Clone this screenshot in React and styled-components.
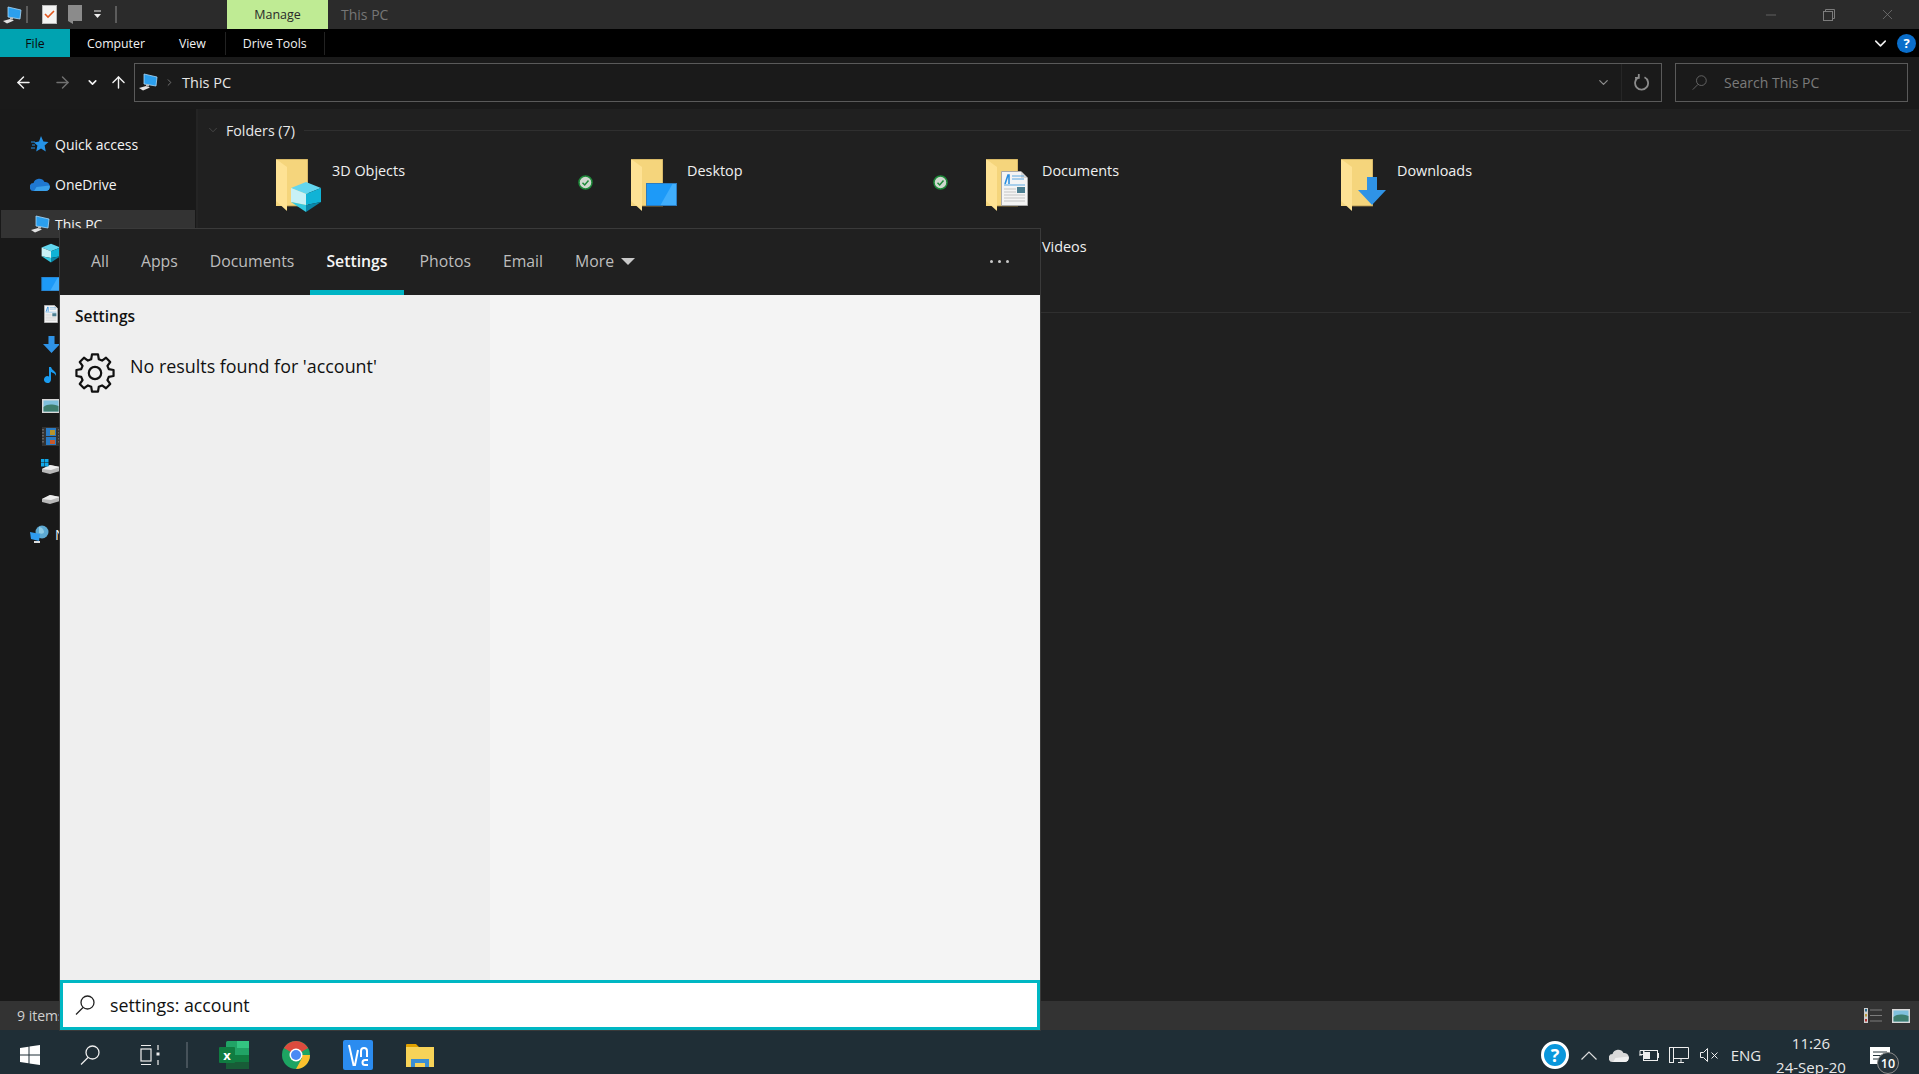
import React from 'react';
import styled, { createGlobalStyle } from 'styled-components';
import { ArrowLeft, ArrowRight, ArrowUp, ChevronDown, ChevronRight, Minus, X } from 'lucide-react';

const GlobalStyle = createGlobalStyle`
  html, body { margin: 0; padding: 0; height: 100%; background: #202020; overflow: hidden; }
  * { box-sizing: border-box; }
  body { font-family: "Open Sans", "Noto Sans", "Liberation Sans", sans-serif; }
`;

const Screen = styled.div`
  position: relative;
  width: 1919px;
  height: 1074px;
  display: flex;
  flex-direction: column;
  overflow: hidden;
  color: #fff;
`;

/* title bar */
const TitleBar = styled.div`
  height: 29px;
  background: #2b2b2b;
  display: flex;
  flex-shrink: 0;
`;
const QuickTools = styled.div`
  width: 227px;
  display: flex;
  align-items: center;
  padding-left: 2px;
`;
const ToolSep = styled.span`
  width: 2px;
  height: 17px;
  background: #5c5c5c;
  margin: 0 ${(p) => p.$right || 0}px 0 ${(p) => p.$left || 0}px;
`;
const ManageTab = styled.div`
  width: 101px;
  background: #bfeb94;
  color: #2a2a2a;
  font-size: 12.5px;
  display: flex;
  align-items: center;
  justify-content: center;
`;
const WindowTitle = styled.div`
  margin-left: 13px;
  color: #767676;
  font-size: 14px;
  line-height: 29px;
  flex: 1;
`;
const WinButton = styled.div`
  width: 58.5px;
  display: flex;
  align-items: center;
  justify-content: center;
  color: #7c7c7c;
`;

/* ribbon */
const Ribbon = styled.div`
  height: 28px;
  background: #000;
  display: flex;
  align-items: stretch;
  flex-shrink: 0;
  font-size: 12.3px;
`;
const FileTab = styled.div`
  width: 70px;
  background: #00a3b1;
  color: #0b0b0b;
  display: flex;
  align-items: center;
  justify-content: center;
`;
const RibbonTab = styled.div`
  padding: 0 17px;
  display: flex;
  align-items: center;
  color: #f2f2f2;
  height: 23px;
  margin-top: 3px;
  ${(p) => p.$tool && 'margin-left: 2px; border-left: 1px solid #222; border-right: 1px solid #222;'}
`;
const RibbonRight = styled.div`
  margin-left: auto;
  display: flex;
  align-items: center;
  padding-right: 3px;
  gap: 7px;
`;
const HelpDot = styled.div`
  width: 19px;
  height: 19px;
  border-radius: 50%;
  background: #0a6ecb;
  color: #fff;
  font-weight: 700;
  font-size: 13px;
  display: flex;
  align-items: center;
  justify-content: center;
`;

/* address row */
const AddressRow = styled.div`
  height: 52px;
  background: #1a1a1a;
  display: flex;
  align-items: center;
  flex-shrink: 0;
  padding: 0 11px 2px 4px;
`;
const NavButton = styled.div`
  width: ${(p) => p.$w}px;
  display: flex;
  align-items: center;
  justify-content: center;
  color: ${(p) => (p.$off ? '#707070' : '#f2f2f2')};
`;
const AddressBox = styled.div`
  flex: 1;
  height: 39px;
  border: 1px solid #5a5a5a;
  display: flex;
  align-items: center;
  padding-left: 3px;
  font-size: 14.5px;
  color: #e6e6e6;
`;
const Crumb = styled.span`
  margin-left: 7px;
`;
const AddressEnd = styled.div`
  margin-left: auto;
  display: flex;
  height: 100%;
  color: #8c8c8c;
`;
const AddressCell = styled.div`
  width: ${(p) => p.$w}px;
  display: flex;
  align-items: center;
  justify-content: center;
  ${(p) => p.$line && 'border-left: 1px solid #262626;'}
`;
const SearchBox = styled.div`
  width: 233px;
  height: 39px;
  margin-left: 13px;
  border: 1px solid #5a5a5a;
  display: flex;
  align-items: center;
  padding-left: 16px;
  gap: 17px;
  color: #7a7a7a;
  font-size: 14px;
`;

/* main area */
const Main = styled.div`
  flex: 1;
  display: flex;
  min-height: 0;
`;
const Sidebar = styled.div`
  width: 198px;
  background: #191919;
  border-right: 2px solid #242424;
  padding-top: 21px;
  flex-shrink: 0;
  font-size: 14px;
`;
const NavRow = styled.div`
  height: ${(p) => (p.$child ? 30.5 : 28)}px;
  margin-top: ${(p) => p.$top || 0}px;
  width: 194px;
  margin-left: 1px;
  padding-left: ${(p) => (p.$child ? 40 : 29)}px;
  display: flex;
  align-items: center;
  gap: 5px;
  color: #f4f4f4;
  white-space: nowrap;
  background: ${(p) => (p.$active ? '#333333' : 'transparent')};
`;
const NavIcon = styled.span`
  width: 20px;
  height: 20px;
  display: flex;
  flex-shrink: 0;
  align-items: center;
  justify-content: center;
`;
const Content = styled.div`
  flex: 1;
  background: #202020;
  padding: 9px 8px 0 8px;
`;
const SectionHead = styled.div`
  height: 24px;
  display: flex;
  align-items: center;
  gap: 6px;
  font-size: 14.2px;
  color: #e8e8e8;
  margin-top: ${(p) => p.$top || 0}px;
`;
const HeadChevron = styled.span`
  display: flex;
  color: #5f5f5f;
`;
const HeadLine = styled.span`
  flex: 1;
  height: 1px;
  margin-left: 3px;
  background: #2f2f2f;
`;
const FolderGrid = styled.div`
  display: grid;
  grid-template-columns: repeat(4, 355px);
  grid-auto-rows: 76px;
  margin: 17px 0 0 56px;
`;
const FolderItem = styled.div`
  display: flex;
  padding-left: 14px;
  padding-right: 24px;
  font-size: 14.4px;
  color: #f0f0f0;
`;
const FolderName = styled.span`
  margin: 2px 0 0 ${(p) => p.$gap || 8}px;
  line-height: 20px;
`;
const SyncDot = styled.span`
  margin: 16px 0 0 auto;
  display: flex;
`;

/* status bar */
const StatusBar = styled.div`
  height: 29px;
  background: #333333;
  display: flex;
  align-items: center;
  flex-shrink: 0;
  padding: 0 9px 0 17px;
  font-size: 14px;
  color: #d0d0d0;
`;
const ViewToggles = styled.div`
  margin-left: auto;
  display: flex;
  align-items: center;
  gap: 10px;
`;

/* taskbar */
const Taskbar = styled.div`
  height: 44px;
  padding-top: 6px;
  background: #1f2e36;
  display: flex;
  align-items: center;
  flex-shrink: 0;
`;
const TaskButton = styled.div`
  width: ${(p) => p.$w || 60}px;
  height: 100%;
  display: flex;
  align-items: center;
  justify-content: center;
`;
const TaskSep = styled.span`
  width: 2px;
  height: 26px;
  background: #46525a;
  margin: 0 15px 0 6px;
`;
const Tray = styled.div`
  margin-left: auto;
  height: 100%;
  display: flex;
  align-items: center;
  padding-right: 13px;
  color: #e8e8e8;
`;
const TrayCell = styled.div`
  width: ${(p) => p.$w || 30}px;
  height: 100%;
  display: flex;
  align-items: center;
  justify-content: center;
  position: relative;
  font-size: 15px;
`;
const TrayHelp = styled.div`
  width: 28px;
  height: 28px;
  border-radius: 50%;
  border: 3px solid #fff;
  background: #0a97dc;
  color: #fff;
  font-weight: 700;
  font-size: 18px;
  display: flex;
  align-items: center;
  justify-content: center;
`;
const Clock = styled.div`
  display: flex;
  flex-direction: column;
  align-items: center;
  gap: 10px;
  line-height: 14px;
  font-size: 15px;
  white-space: nowrap;
`;
const Badge = styled.span`
  position: absolute;
  left: 23px;
  top: 16px;
  width: 22px;
  height: 22px;
  border-radius: 50%;
  border: 1px solid #8b8b8b;
  background: #27343b;
  color: #fff;
  font-size: 12.5px;
  font-weight: 600;
  display: flex;
  align-items: center;
  justify-content: center;
`;

/* search flyout */
const Flyout = styled.div`
  position: absolute;
  left: 60px;
  top: 229px;
  width: 980px;
  height: 801px;
  display: flex;
  flex-direction: column;
  box-shadow: 0 0 0 1px #3a3a3a;
`;
const FlyoutTabs = styled.div`
  height: 66px;
  background: #202020;
  display: flex;
  align-items: stretch;
  padding-left: 15px;
  flex-shrink: 0;
`;
const FlyoutTab = styled.div`
  padding: 3px 16px 0;
  display: flex;
  align-items: center;
  gap: 7px;
  font-size: 15.8px;
  color: ${(p) => (p.$on ? '#f5f5f5' : '#bdbdbd')};
  font-weight: ${(p) => (p.$on ? 600 : 400)};
  border-bottom: 5px solid ${(p) => (p.$on ? '#00b4c4' : 'transparent')};
`;
const Caret = styled.span`
  width: 0;
  height: 0;
  border-left: 7px solid transparent;
  border-right: 7px solid transparent;
  border-top: 7px solid #c8c8c8;
`;
const MoreDots = styled.div`
  margin: 0 31px 0 auto;
  display: flex;
  align-items: center;
  gap: 5px;
  padding-bottom: 1px;

  span {
    width: 3px;
    height: 3px;
    border-radius: 50%;
    background: #c8c8c8;
  }
`;
const FlyoutBody = styled.div`
  flex: 1;
  display: flex;
  background: #f4f4f4;
`;
const Results = styled.div`
  width: 430px;
  background: #efefef;
  padding: 10px 15px;
  color: #111;
`;
const ResultsTitle = styled.div`
  font-size: 15.5px;
  font-weight: 600;
  line-height: 22px;
`;
const NoResult = styled.div`
  display: flex;
  gap: 15px;
  margin-top: 26px;
  font-size: 17.9px;
  line-height: 26px;
`;
const SearchInput = styled.div`
  height: 50px;
  background: #fff;
  border: 3px solid #00b7c3;
  display: flex;
  align-items: center;
  padding-left: 12px;
  gap: 15px;
  color: #111;
  font-size: 17.8px;
  flex-shrink: 0;
`;

/* drawings */
const PcIcon = ({ size = 20 }) => (
  <svg width={size} height={size} viewBox="0 0 20 20">
    <polygon points="6,2 19,5 18,14 6,12" fill="#2b9fee" stroke="#a9d8f7" strokeWidth="0.8" />
    <polygon points="1,16 8,14 12,15.5 5,18.5" fill="#e2e2e2" />
    <rect x="8" y="12.5" width="3" height="2" fill="#bbb" />
  </svg>
);

const Star = () => (
  <svg width="18" height="18" viewBox="0 0 18 18">
    <polygon points="10,1 12.4,6.4 17.5,7 13.6,10.6 14.8,16.5 10,13.5 5.2,16.5 6.4,10.6 3,7.5 8,6.4" fill="#2592e6" />
    <path d="M0 7h4M1 10h3M0 13h4" stroke="#2592e6" strokeWidth="1" />
  </svg>
);

const Cloud = ({ w = 20, c1 = '#1f78d1', c2 = '#3aa0ea' }) => (
  <svg width={w} height={w * 0.65} viewBox="0 0 20 13">
    <path d="M4 13a4 4 0 0 1-.5-8A6 6 0 0 1 14.5 4 4.5 4.5 0 0 1 16 13z" fill={c1} />
    <path d="M4 13h12a4 4 0 0 0 3.5-5.5L6.500 9z" fill={c2} />
  </svg>
);

const Cube = ({ size = 32 }) => (
  <svg width={size} height={size} viewBox="0 0 32 32">
    <polygon points="16,1 31,7 16,13 1,7" fill="#62d6ef" />
    <polygon points="1,7 16,13 16,24 1,21" fill="#c8f1f6" />
    <polygon points="16,13 31,7 31,21 16,24" fill="#10b3d6" />
    <polygon points="1,21 16,24 16,31" fill="#33c8df" />
    <polygon points="31,21 16,24 16,31" fill="#0a86a8" />
  </svg>
);

const DocSheet = ({ w = 27, h = 35 }) => (
  <svg width={w} height={h} viewBox="0 0 27 35">
    <polygon points="0.500,0.500 20,0.500 26.500,7 26.500,34.500 0.500,34.500" fill="#f4f4f4" stroke="#aaa" />
    <polygon points="20,0.500 26.500,7 20,7" fill="#d5d5d5" />
    <path d="M4 13 7 4h1v9" stroke="#2b8fe0" strokeWidth="1.600" fill="none" />
    <path d="M11 5h12M11 8h12M3 14h21" stroke="#5aa8e2" strokeWidth="1" />
    <path d="M3 18h12M3 21h12M3 24h21M3 27h21M3 30h21" stroke="#c4c4c4" strokeWidth="1" />
    <rect x="16" y="16" width="8" height="6" fill="#4b7f92" />
  </svg>
);

const DownArrow = ({ w = 28, h = 28 }) => (
  <svg width={w} height={h} viewBox="0 0 28 28">
    <polygon points="9,0 19,0 19,13 28,13 14,28 0,13 9,13" fill="#2f93e6" />
  </svg>
);

const FolderBox = styled.span`
  position: relative;
  width: 46px;
  height: 53px;
  flex-shrink: 0;
  display: block;
`;
const FolderIcon = ({ children }) => (
  <FolderBox>
    <svg width="32" height="52" viewBox="0 0 32 52">
      <rect x="0" y="0" width="32" height="47" fill="#f5d57c" />
      <polygon points="0,0 11,8 11,52 0,42" fill="#fee294" />
      <path d="M0 0h32v47H11" fill="none" stroke="#a98e4a" strokeWidth="0.800" />
    </svg>
    {children}
  </FolderBox>
);
const Overlay = styled.span`
  position: absolute;
  left: ${(p) => p.$x}px;
  top: ${(p) => p.$y}px;
  display: flex;
`;

const BlueTile = ({ w = 31, h = 23 }) => (
  <svg width={w} height={h} viewBox="0 0 31 23">
    <rect width="31" height="23" fill="#1d9af8" />
    <polygon points="14,23 27,0 31,0 31,23" fill="#40aefc" />
    <rect x="0.500" y="0.500" width="30" height="22" fill="none" stroke="#2b7cc0" />
  </svg>
);

const PhotoThumb = ({ w = 18, h = 14 }) => (
  <svg width={w} height={h} viewBox="0 0 18 14">
    <rect width="18" height="14" fill="#d8d8d8" />
    <rect x="1.500" y="1.500" width="15" height="11" fill="#7fc0dd" />
    <path d="M1.500 8c4-3 8-3 15-1v5.500h-15z" fill="#3d7d6e" />
  </svg>
);

const Film = () => (
  <svg width="18" height="19" viewBox="0 0 18 19">
    <rect width="18" height="19" fill="#333" />
    <rect x="4" y="1" width="10" height="8" fill="#2a7bc4" />
    <rect x="4" y="10" width="10" height="8" fill="#2a7bc4" />
    <rect x="8" y="3" width="5" height="5" fill="#b8942c" />
    <rect x="8" y="13" width="5" height="4" fill="#c85a2c" />
    <path d="M1 2v15M17 2v15" stroke="#777" strokeWidth="1.400" strokeDasharray="1.500 1.500" />
  </svg>
);

const Drive = ({ win }) => (
  <svg width="20" height="16" viewBox="0 0 20 16">
    <polygon points="1,10 9,6 19,8 19,12 9,15 1,13" fill="#b9b9b9" />
    <polygon points="1,10 9,6 19,8 10,11" fill="#ececec" />
    {win && (
      <g fill="#10a8e8">
        <rect x="0" y="0" width="3.500" height="3.500" />
        <rect x="4" y="0" width="3.500" height="3.500" />
        <rect x="0" y="4" width="3.500" height="3.500" />
        <rect x="4" y="4" width="3.500" height="3.500" />
      </g>
    )}
  </svg>
);

const Note = () => (
  <svg width="14" height="18" viewBox="0 0 14 18">
    <path d="M7 1v12.500a3.500 3.500 0 1 1-2-3.100V1z" fill="#1a9cf0" />
    <path d="M7 1c1 4 6 4 5 9-1-3-3-3-5-4z" fill="#1a9cf0" />
  </svg>
);

const Globe = () => (
  <svg width="20" height="20" viewBox="0 0 20 20">
    <circle cx="12" cy="7" r="6.500" fill="#5da9d2" />
    <path d="M9 2c3 0 5 3 5 5s-3 2-5 1z" fill="#8fcbe5" />
    <polygon points="0,7 10,9 9,16 1,14" fill="#2e9cf0" />
    <rect x="4" y="16" width="6" height="2" fill="#ddd" />
  </svg>
);

const CheckMark = () => (
  <svg width="15" height="15" viewBox="0 0 15 15">
    <circle cx="7.500" cy="7.500" r="6.500" fill="#cfd8cf" stroke="#1e8a3a" strokeWidth="1.500" />
    <path d="M4.500 7.800 6.700 10l3.800-4.500" stroke="#1e8a3a" strokeWidth="1.500" fill="none" />
  </svg>
);

const Refresh = () => (
  <svg width="16" height="17" viewBox="0 0 16 17" fill="none" stroke="#8c8c8c" strokeWidth="1.800">
    <path d="M10.500 3.300A6.500 6.500 0 1 1 4.500 3.400" />
    <path d="M4.800 0v3.800H1" />
  </svg>
);

const gearPoints = () => {
  const pts = [];
  for (let i = 0; i < 8; i++) {
    const a = (i * Math.PI) / 4;
    [[14.3, -0.27], [18.8, -0.16], [18.8, 0.16], [14.3, 0.27]].forEach(([r, d]) => {
      pts.push(`${(20 + r * Math.cos(a + d)).toFixed(2)},${(20 + r * Math.sin(a + d)).toFixed(2)}`);
    });
  }
  return pts.join(' ');
};

const Gear = () => (
  <svg width="40" height="40" viewBox="0 0 40 40" fill="none" stroke="#111" strokeWidth="2.200" strokeLinejoin="round">
    <polygon points={gearPoints()} />
    <circle cx="20" cy="20" r="6.200" />
  </svg>
);

const Lens = ({ size = 20, color = '#333', sw = 1.4 }) => (
  <svg width={size} height={size} viewBox="0 0 20 20" fill="none" stroke={color} strokeWidth={sw}>
    <circle cx="12.500" cy="7.500" r="6.500" />
    <path d="M8 12.500 1 19.500" />
  </svg>
);

const WinLogo = () => (
  <svg width="20" height="20" viewBox="0 0 20 20" fill="#fff">
    <polygon points="0,3 8.500,1.700 8.500,9.500 0,9.500" />
    <polygon points="9.500,1.500 20,0 20,9.500 9.500,9.500" />
    <polygon points="0,10.500 8.500,10.500 8.500,18.300 0,17" />
    <polygon points="9.500,10.500 20,10.500 20,20 9.500,18.500" />
  </svg>
);

const TaskView = () => (
  <svg width="20" height="20" viewBox="0 0 20 20" fill="none" stroke="#eee" strokeWidth="1.200">
    <path d="M1 .500h10M1 19.500h10" />
    <rect x="1" y="4" width="10" height="12" />
    <path d="M18 0v5M18 15v5" />
    <rect x="16.500" y="7.500" width="3" height="3" fill="#eee" stroke="none" />
  </svg>
);

const Excel = () => (
  <svg width="30" height="28" viewBox="0 0 30 28">
    <rect x="7" y="0" width="23" height="28" rx="1.500" fill="#21a366" />
    <rect x="18" y="0" width="12" height="7" fill="#33c481" />
    <rect x="7" y="14" width="23" height="7" fill="#107c41" />
    <rect x="7" y="21" width="23" height="7" fill="#185c37" />
    <rect x="0" y="6" width="16" height="16" rx="1" fill="#107c41" />
    <text x="8" y="19" textAnchor="middle" fontSize="13" fontWeight="700" fill="#fff" fontFamily="Open Sans, sans-serif">x</text>
  </svg>
);

const Chrome = () => (
  <svg width="28" height="28" viewBox="0 0 28 28">
    <circle cx="14" cy="14" r="14" fill="#1da462" />
    <path d="M14 14 1.900 7A14 14 0 0 1 26.100 7z" fill="#dd4b3e" />
    <path d="M14 14h14A14 14 0 0 1 14 28L20 17z" fill="#fbc02d" />
    <circle cx="14" cy="14" r="6.500" fill="#fff" />
    <circle cx="14" cy="14" r="5" fill="#4a8af4" />
  </svg>
);

const Vnc = () => (
  <svg width="30" height="30" viewBox="0 0 30 30">
    <rect width="30" height="30" rx="2" fill="#2b8cf0" />
    <path d="M6 5l4.500 20h1.500L15 10M18 17v-6a3 3 0 0 1 6 0v6M25 20h-3a2.500 2.500 0 0 0 0 5h3" fill="none" stroke="#fff" strokeWidth="2" />
  </svg>
);

const Explorer = () => (
  <svg width="28" height="24" viewBox="0 0 28 24">
    <path d="M0 2a1 1 0 0 1 1-1h9l3 3h15v4H0z" fill="#e0a100" />
    <rect y="4" width="28" height="20" fill="#f7d358" />
    <path d="M5 24v-8h18v8h-4v-4H9v4z" fill="#3a8fd4" />
  </svg>
);

const ChevronTray = () => (
  <svg width="16" height="9" viewBox="0 0 16 9" fill="none" stroke="#ddd" strokeWidth="1.200"><path d="M.500 8.500 8 1l7.500 7.500" /></svg>
);

const Battery = () => (
  <svg width="20" height="14" viewBox="0 0 20 14" fill="none" stroke="#eee">
    <rect x="4.500" y="2.500" width="14" height="10" />
    <rect x="5" y="4" width="6" height="7" fill="#eee" stroke="none" />
    <path d="M19.500 5v5M0 7h3M1 2.500h4v4H1z" />
  </svg>
);

const NetIcon = () => (
  <svg width="20" height="16" viewBox="0 0 20 16" fill="none" stroke="#eee">
    <path d="M5 .500h14.500v11H4" />
    <rect x=".500" y=".500" width="4" height="15" />
    <path d="M12 12v3M9 15.500h6" />
  </svg>
);

const Mute = () => (
  <svg width="19" height="14" viewBox="0 0 19 14" fill="none" stroke="#eee">
    <path d="M.500 4.500h3l4-4v13l-4-4h-3zM11.500 4.500l6 6M17.500 4.500l-6 6" />
  </svg>
);

const NoteBubble = () => (
  <svg width="20" height="17" viewBox="0 0 20 17">
    <rect width="20" height="17" fill="#fff" />
    <path d="M3 5h14M3 8.500h14M3 12h9" stroke="#26343b" strokeWidth="1" />
  </svg>
);

const DetailsView = () => (
  <svg width="18" height="15" viewBox="0 0 18 15">
    <rect width="4" height="15" fill="#cfcfcf" />
    <rect x="1" y="1" width="2" height="2.500" fill="#2a6a8a" />
    <rect x="1" y="6" width="2" height="2.500" fill="#b89a3c" />
    <rect x="1" y="11" width="2" height="2.500" fill="#b03030" />
    <path d="M6 2h12M6 7.500h12M6 13h12" stroke="#7c7c7c" strokeWidth="1" />
  </svg>
);

// the last row sits mostly under the search flyout, only Videos shows
const folders = [
  { id: 'objects', name: '3D Objects', x: 14, y: 22, art: <Cube />, synced: true, gap: 10 },
  { id: 'desktop', name: 'Desktop', x: 15, y: 24, art: <BlueTile />, synced: true, gap: 10 },
  { id: 'documents', name: 'Documents', x: 15, y: 12, art: <DocSheet />, gap: 10 },
  { id: 'downloads', name: 'Downloads', x: 17, y: 18, art: <DownArrow />, gap: 10 },
  { id: 'music' },
  { id: 'pictures' },
  { id: 'videos', name: 'Videos', gap: 10 },
];

const treeIcons = [
  <Cube size={20} />,
  <BlueTile w={20} h={14} />,
  <DocSheet w={14} h={18} />,
  <DownArrow w={17} h={17} />,
  <Note />,
  <PhotoThumb />,
  <Film />,
  <Drive win />,
  <Drive />,
];

const tabs = ['All', 'Apps', 'Documents', 'Settings', 'Photos', 'Email'];

const App = () => (
  <Screen>
    <GlobalStyle />
    <TitleBar>
      <QuickTools>
        <PcIcon />
        <ToolSep $left={4} $right={14} />
        <svg width="15" height="19" viewBox="0 0 15 19">
          <rect x=".500" y=".500" width="14" height="18" fill="#f3f3f3" stroke="#bbb" />
          <path d="M3 9l3 3 6-6" stroke="#e2561e" strokeWidth="1.600" fill="none" />
        </svg>
        <svg width="14" height="19" viewBox="0 0 14 19" style={{ marginLeft: 11 }}>
          <polygon points="0,0 14,0 14,16 5,16 5,19 0,16" fill="#8b8b8b" />
        </svg>
        <svg width="9" height="9" viewBox="0 0 9 9" style={{ marginLeft: 11 }}>
          <path d="M1 1h7" stroke="#eee" />
          <polygon points="1,4 8,4 4.500,8" fill="#eee" />
        </svg>
        <ToolSep $left={13} />
      </QuickTools>
      <ManageTab>Manage</ManageTab>
      <WindowTitle>This PC</WindowTitle>
      <WinButton><Minus size={16} strokeWidth={1} /></WinButton>
      <WinButton>
        <svg width="12" height="12" viewBox="0 0 12 12" fill="none" stroke="#7c7c7c">
          <rect x=".500" y="2.500" width="9" height="9" />
          <path d="M2.500 2.500v-2h9v9h-2" />
        </svg>
      </WinButton>
      <WinButton><X size={17} strokeWidth={1} /></WinButton>
      <NavButton $w={2} />
    </TitleBar>
    <Ribbon>
      <FileTab>File</FileTab>
      <RibbonTab>Computer</RibbonTab>
      <RibbonTab>View</RibbonTab>
      <RibbonTab $tool>Drive Tools</RibbonTab>
      <RibbonRight>
        <ChevronDown size={19} color="#eee" strokeWidth={2} />
        <HelpDot>?</HelpDot>
      </RibbonRight>
    </Ribbon>
    <AddressRow>
      <NavButton $w={39}><ArrowLeft size={19} strokeWidth={1.8} /></NavButton>
      <NavButton $w={39} $off><ArrowRight size={19} strokeWidth={1.8} /></NavButton>
      <NavButton $w={20}><ChevronDown size={13} strokeWidth={3} /></NavButton>
      <NavButton $w={32}><ArrowUp size={19} strokeWidth={1.8} /></NavButton>
      <AddressBox>
        <PcIcon />
        <ChevronRight size={11} color="#777" strokeWidth={2} style={{ marginLeft: 6 }} />
        <Crumb>This PC</Crumb>
        <AddressEnd>
          <AddressCell $w={36}><ChevronDown size={15} strokeWidth={2} /></AddressCell>
          <AddressCell $w={40} $line><Refresh /></AddressCell>
        </AddressEnd>
      </AddressBox>
      <SearchBox>
        <Lens size={15} color="#7a7a7a" sw={1} />
        Search This PC
      </SearchBox>
    </AddressRow>
    <Main>
      <Sidebar>
        <NavRow><NavIcon><Star /></NavIcon>Quick access</NavRow>
        <NavRow $top={12}><NavIcon><Cloud /></NavIcon>OneDrive</NavRow>
        <NavRow $top={12} $active><NavIcon><PcIcon /></NavIcon>This PC</NavRow>
        {treeIcons.map((icon, i) => (
          <NavRow key={i} $child><NavIcon>{icon}</NavIcon></NavRow>
        ))}
        <NavRow $top={8}><NavIcon><Globe /></NavIcon>Network</NavRow>
      </Sidebar>
      <Content>
        <SectionHead>
          <HeadChevron><ChevronDown size={14} strokeWidth={1} /></HeadChevron>
          Folders (7)
          <HeadLine />
        </SectionHead>
        <FolderGrid>
          {folders.map((f) => (
            <FolderItem key={f.id}>
              <FolderIcon>
                {f.art && <Overlay $x={f.x} $y={f.y}>{f.art}</Overlay>}
              </FolderIcon>
              {f.name && <FolderName $gap={f.gap}>{f.name}</FolderName>}
              {f.synced && <SyncDot><CheckMark /></SyncDot>}
            </FolderItem>
          ))}
        </FolderGrid>
        <SectionHead $top={-11}>
          <HeadLine />
        </SectionHead>
      </Content>
    </Main>
    <StatusBar>
      9 items
      <ViewToggles>
        <DetailsView />
        <PhotoThumb />
      </ViewToggles>
    </StatusBar>
    <Taskbar>
      <TaskButton><WinLogo /></TaskButton>
      <TaskButton><Lens size={20} color="#eee" sw={1.300} /></TaskButton>
      <TaskButton><TaskView /></TaskButton>
      <TaskSep />
      <TaskButton $w={62}><Excel /></TaskButton>
      <TaskButton $w={62}><Chrome /></TaskButton>
      <TaskButton $w={62}><Vnc /></TaskButton>
      <TaskButton $w={62}><Explorer /></TaskButton>
      <Tray>
        <TrayCell $w={38}><TrayHelp>?</TrayHelp></TrayCell>
        <TrayCell><ChevronTray /></TrayCell>
        <TrayCell><Cloud c1="#d9d9d9" c2="#f0f0f0" /></TrayCell>
        <TrayCell><Battery /></TrayCell>
        <TrayCell><NetIcon /></TrayCell>
        <TrayCell><Mute /></TrayCell>
        <TrayCell $w={44}>ENG</TrayCell>
        <TrayCell $w={86}><Clock><span>11:26</span><span>24-Sep-20</span></Clock></TrayCell>
        <TrayCell $w={52}><NoteBubble /><Badge>10</Badge></TrayCell>
      </Tray>
    </Taskbar>
    <Flyout>
      <FlyoutTabs>
        {tabs.map((t) => (
          <FlyoutTab key={t} $on={t === 'Settings'}>{t}</FlyoutTab>
        ))}
        <FlyoutTab>More <Caret /></FlyoutTab>
        <MoreDots><span /><span /><span /></MoreDots>
      </FlyoutTabs>
      <FlyoutBody>
        <Results>
          <ResultsTitle>Settings</ResultsTitle>
          <NoResult>
            <Gear />
            No results found for 'account'
          </NoResult>
        </Results>
      </FlyoutBody>
      <SearchInput>
        <Lens size={20} color="#222" sw={1.300} />
        settings: account
      </SearchInput>
    </Flyout>
  </Screen>
);

export default App;
